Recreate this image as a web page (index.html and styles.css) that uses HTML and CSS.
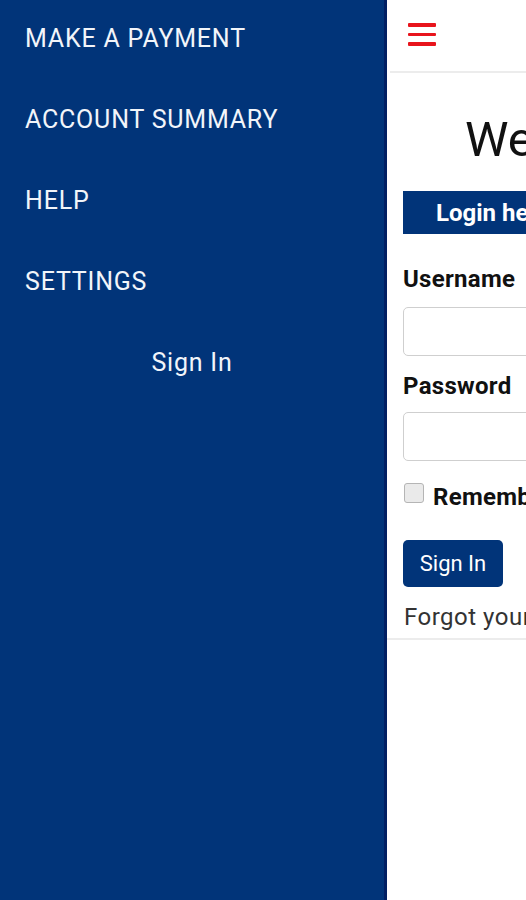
FILE: index.html
```html
<!DOCTYPE html>
<html lang="en">
<head>
<meta charset="utf-8">
<title>Login</title>
<link rel="stylesheet" href="styles.css">
</head>
<body>
<div class="app">
  <nav class="drawer">
    <a class="drawer-item">MAKE A PAYMENT</a>
    <a class="drawer-item">ACCOUNT SUMMARY</a>
    <a class="drawer-item">HELP</a>
    <a class="drawer-item">SETTINGS</a>
    <a class="drawer-signin">Sign In</a>
  </nav>
  <main class="page">
    <header class="topbar">
      <span class="burger"><span></span><span></span><span></span></span>
    </header>
    <section class="content">
      <h1 class="title">Welcome</h1>
      <div class="panel-head">Login here</div>
      <label class="label">Username</label>
      <div class="input"></div>
      <label class="label label-pw">Password</label>
      <div class="input input-pw"></div>
      <div class="remember"><span class="checkbox"></span><span>Remember me</span></div>
      <button class="btn">Sign In</button>
      <p class="forgot">Forgot your password?</p>
    </section>
  </main>
</div>
</body>
</html>
```
FILE: styles.css
```css
* { box-sizing: border-box; }
html, body { margin: 0; padding: 0; }
body {
  width: 526px;
  height: 900px;
  overflow: hidden;
  font-family: Roboto, "Liberation Sans", sans-serif;
  background: #fff;
}
.app {
  display: flex;
  height: 900px;
  width: 1000px;
}
.drawer {
  width: 387px;
  flex: none;
  background: #013479;
  border-right: 3px solid #011f62;
  display: flex;
  flex-direction: column;
  color: #fff;
}
.drawer-item {
  height: 81px;
  display: flex;
  align-items: center;
  padding: 0 0 5px 25px;
  font-size: 25px;
  letter-spacing: 0.8px;
  color: #f2f5fa;
}
.drawer-signin {
  height: 81px;
  display: flex;
  align-items: center;
  justify-content: center;
  padding-bottom: 5px;
  font-size: 25px;
  letter-spacing: 0.8px;
  color: #f2f5fa;
}
.page {
  width: 560px;
  flex: none;
}
.topbar {
  height: 73px;
  border-bottom: 2px solid #ececec;
  margin-left: 3px;
  display: flex;
  align-items: center;
  padding-left: 18px;
}
.burger {
  display: flex;
  flex-direction: column;
  gap: 6px;
  width: 28px;
  margin-top: -2px;
}
.burger span {
  display: block;
  height: 3.5px;
  background: #e8141c;
  border-radius: 1px;
}
.content {
  padding: 0 16px 7px;
  border-bottom: 2px solid #ececec;
}
.title {
  margin: 38px 0 0 62px;
  font-size: 49px;
  font-weight: 400;
  color: #111;
  line-height: 58px;
}
.panel-head {
  margin-top: 22px;
  height: 43px;
  background: #013479;
  color: #fff;
  font-weight: 700;
  font-size: 24px;
  display: flex;
  align-items: center;
  padding-left: 33px;
}
.label {
  display: block;
  margin-top: 31px;
  font-weight: 700;
  font-size: 24px;
  letter-spacing: 0.3px;
  color: #111;
  line-height: 28px;
}
.input {
  margin-top: 14px;
  height: 49px;
  border: 1px solid #cfcfcf;
  border-radius: 5px;
  background: #fff;
}
.label-pw { margin-top: 16px; }
.input-pw { margin-top: 12px; }
.remember {
  margin-top: 22px;
  display: flex;
  align-items: flex-start;
  gap: 9px;
  font-weight: 700;
  font-size: 24px;
  letter-spacing: 0.3px;
  line-height: 28px;
  color: #111;
}
.checkbox {
  width: 20px;
  height: 20px;
  border: 1.5px solid #b5b5b5;
  border-radius: 3px;
  background: #eaeaea;
  margin-left: 1px;
  flex: none;
}
.btn {
  margin-top: 29px;
  display: block;
  width: 100px;
  height: 47px;
  background: #013479;
  color: #fff;
  border: none;
  border-radius: 5px;
  font-family: Roboto, "Liberation Sans", sans-serif;
  font-size: 22px;
  padding: 0;
}
.forgot {
  margin: 16px 0 0;
  font-size: 24px;
  letter-spacing: 0.5px;
  color: #333;
  line-height: 28px;
  padding-left: 1px;
}
```
